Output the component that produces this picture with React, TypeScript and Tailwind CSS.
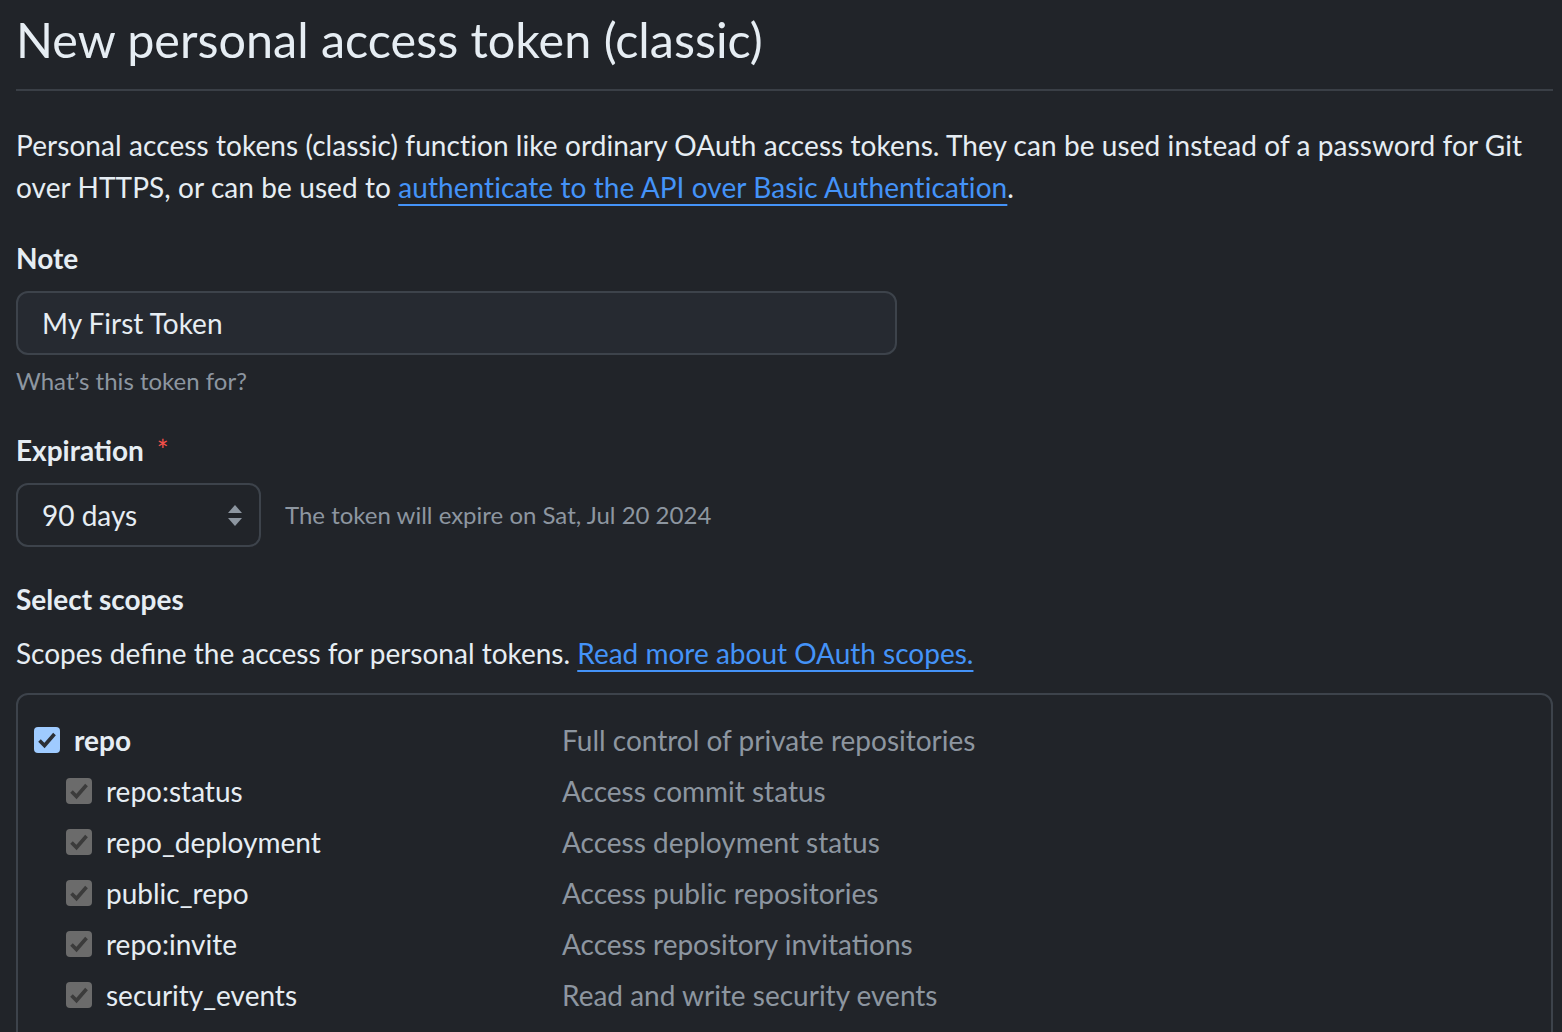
import React from 'react';

const scopes = [
  { name: 'repo:status', desc: 'Access commit status' },
  { name: 'repo_deployment', desc: 'Access deployment status' },
  { name: 'public_repo', desc: 'Access public repositories' },
  { name: 'repo:invite', desc: 'Access repository invitations' },
  { name: 'security_events', desc: 'Read and write security events' },
];

const CheckBox = ({ disabled }: { disabled?: boolean }) => (
  <span
    className={`flex-shrink-0 w-[26px] h-[26px] rounded-[4px] flex items-center justify-center ${
      disabled ? 'bg-[#6b6b6b]' : 'bg-[#9fcbff]'
    }`}
  >
    <svg width="26" height="26" viewBox="0 0 26 26" fill="none">
      <path
        d="M5.5 13.5 L10.5 18.5 L20.5 7"
        stroke={disabled ? '#3b3b3b' : '#2b2f35'}
        strokeWidth="3.6"
      />
    </svg>
  </span>
);

export default function App() {
  return (
    <div
      className="min-h-screen bg-[#212429] text-[#e6edf3] pl-4 pr-[9px] overflow-hidden"
      style={{ fontFamily: 'Lato, "Noto Sans", sans-serif' }}
    >
      <h1 className="pt-[3px] text-[48.5px] leading-[72px] font-normal">New personal access token (classic)</h1>
      <div className="mt-[14px] h-[2px] bg-[#3a3f46]" />

      <p className="mt-[33px] text-[28px] leading-[42px] tracking-[0.08px]">
        Personal access tokens (classic) function like ordinary OAuth access tokens. They can be used instead of a
        password for Git over HTTPS, or can be used to{' '}
        <a className="text-[#4493f8] underline decoration-2 underline-offset-[6px]">
          authenticate to the API over Basic Authentication
        </a>
        .
      </p>

      <div className="mt-[29px]">
        <label className="block text-[28px] leading-[42px] font-bold">Note</label>
        <div className="mt-3 w-[881px] h-[64px] rounded-[12px] border-2 border-[#3d434b] bg-[#262a31] flex items-center pl-[24px] text-[28px]">
          My First Token
        </div>
        <p className="mt-2 text-[24px] leading-[36px] text-[#8d96a0]">What’s this token for?</p>
      </div>

      <div className="mt-[30px]">
        <label className="block text-[28px] leading-[42px] font-bold">
          Expiration <span className="ml-[6px] font-normal text-[#f85149]">*</span>
        </label>
        <div className="mt-3 flex items-center">
          <div className="w-[245px] h-[64px] rounded-[12px] border-2 border-[#3d434b] bg-[#212429] flex items-center justify-between pl-[24px] pr-[17px] text-[28px]">
            <span>90 days</span>
            <span className="flex flex-col items-center gap-[5px]">
              <svg width="14" height="8" viewBox="0 0 14 8">
                <path d="M7 0 L14 8 L0 8 Z" fill="#8d96a0" />
              </svg>
              <svg width="14" height="8" viewBox="0 0 14 8">
                <path d="M0 0 L14 0 L7 8 Z" fill="#8d96a0" />
              </svg>
            </span>
          </div>
          <span className="ml-[24px] text-[24px] text-[#8d96a0]">The token will expire on Sat, Jul 20 2024</span>
        </div>
      </div>

      <h2 className="mt-[31px] text-[28px] leading-[42px] font-bold">Select scopes</h2>
      <p className="mt-3 text-[28px] leading-[42px]">
        Scopes define the access for personal tokens.{' '}
        <a className="text-[#4493f8] underline decoration-2 underline-offset-[6px]">Read more about OAuth scopes.</a>
      </p>

      <div className="mt-[19px] rounded-[12px] border-2 border-[#3d434b] pt-[19px] pb-[80px] pl-4 text-[28px]">
        <div className="flex items-center h-[51px]">
          <div className="w-[528px] flex items-center">
            <CheckBox />
            <span className="ml-[14px] font-bold">repo</span>
          </div>
          <span className="text-[#8d96a0]">Full control of private repositories</span>
        </div>
        {scopes.map((s) => (
          <div key={s.name} className="flex items-center h-[51px]">
            <div className="w-[528px] pl-8 flex items-center">
              <CheckBox disabled />
              <span className="ml-[14px]">{s.name}</span>
            </div>
            <span className="text-[#8d96a0]">{s.desc}</span>
          </div>
        ))}
      </div>
    </div>
  );
}
